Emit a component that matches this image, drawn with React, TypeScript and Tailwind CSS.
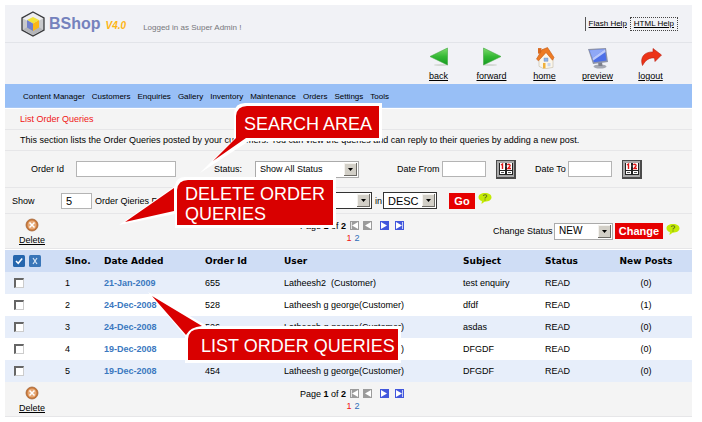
import type { ReactNode } from "react";

const menu = ["Content Manager", "Customers", "Enquiries", "Gallery", "Inventory", "Maintenance", "Orders", "Settings", "Tools"];

const queries = [
  { no: 1, date: "21-Jan-2009", order: "655", user: "Latheesh2  (Customer)", subject: "test enquiry", posts: 0 },
  { no: 2, date: "24-Dec-2008", order: "528", user: "Latheesh g george(Customer)", subject: "dfdf", posts: 1 },
  { no: 3, date: "24-Dec-2008", order: "526", user: "Latheesh g george(Customer)", subject: "asdas", posts: 0 },
  { no: 4, date: "19-Dec-2008", order: "454", user: "Latheesh g george(Customer)", subject: "DFGDF", posts: 0 },
  { no: 5, date: "19-Dec-2008", order: "454", user: "Latheesh g george(Customer)", subject: "DFGDF", posts: 0 },
];

function Logo() {
  return (
    <svg className="h-[26px] w-6" viewBox="0 0 24 26" aria-hidden="true">
      <path d="M12 1 23 7v12l-11 6L1 19V7z" fill="#c9cacd" stroke="#38393c" strokeWidth="1.300" />
      <path d="M12 2 22 7.500 12 13 2 7.500z" fill="#eeeef0" />
      <path d="M12 24 22 18.500 12 13 2 18.500z" fill="#b4b5b9" />
      <path d="m12 6 6 3-6 3.500L6 9z" fill="#f2e43a" />
      <path d="m6 9 6 3.500V20l-6-3.500z" fill="#7080cc" />
      <path d="m18 9-6 3.500V20l6-3.500z" fill="#fbb716" />
    </svg>
  );
}

function BackIcon() {
  return (
    <svg className="h-5 w-5" viewBox="0 0 20 20" aria-hidden="true">
      <defs>
        <linearGradient id="green" x1="0" y1="0" x2="0" y2="1">
          <stop offset="0" stopColor="#7ddb6c" />
          <stop offset="0.5" stopColor="#35b935" />
          <stop offset="1" stopColor="#159a20" />
        </linearGradient>
      </defs>
      <ellipse cx="12" cy="18" rx="7" ry="1" fill="#d4d8d4" />
      <path d="M18.500 1v17L1 9.500z" fill="url(#green)" stroke="#42a83f" strokeWidth=".6" />
    </svg>
  );
}

function ForwardIcon() {
  return (
    <svg className="h-5 w-5" viewBox="0 0 20 20" aria-hidden="true">
      <ellipse cx="8" cy="18" rx="7" ry="1" fill="#d4d8d4" />
      <path d="M1.500 1v17L19 9.500z" fill="url(#green)" stroke="#42a83f" strokeWidth=".6" />
    </svg>
  );
}

function HomeIcon() {
  return (
    <svg className="h-[22px] w-5" viewBox="0 0 20 20" preserveAspectRatio="none" aria-hidden="true">
      <path d="M4 9.500 12 4l6 7v7.500L9 20l-5-2.500z" fill="#fbf6ea" stroke="#c5bda9" strokeWidth=".6" />
      <path d="M3 1h3.500v5H3z" fill="#d9691f" />
      <path d="M1.500 11 7 2.500 12.500.5l6.500 9-1.500 2.500L11 5 3.500 12.500z" fill="#ee7b24" stroke="#c45b15" strokeWidth=".6" />
      <path d="M9 10h4v3H9z" fill="#8fb4e8" stroke="#6f8fc0" strokeWidth=".4" />
      <path d="M8 14.500h2.500v5H8z" fill="#efb13b" />
      <path d="M12.500 14.500h3v3h-3z" fill="#c8d7ee" />
    </svg>
  );
}

function PreviewIcon() {
  return (
    <svg className="h-[22px] w-[22px]" viewBox="0 0 22 22" aria-hidden="true">
      <ellipse cx="13" cy="19.500" rx="6.500" ry="2" fill="#a5a8b2" />
      <path d="m11 15 4 0 .5 4h-4z" fill="#7d808c" />
      <path d="m1 2 18-1 2 14-15 2z" fill="#8d93a8" />
      <path d="m2.500 3.200 15.500-1 1.500 11.300-12.500 1.800z" fill="#4c6fe8" />
      <path d="M2.500 3.200 18 2.200 5.500 11z" fill="#8fa8f6" />
      <path d="M18 2.200 5.500 11l.8 2.400L18.500 5z" fill="#b9c8fb" />
    </svg>
  );
}

function LogoutIcon() {
  return (
    <svg className="h-5 w-[22px]" viewBox="0 0 22 20" aria-hidden="true">
      <path d="M13 1.500 21.500 8 15 14.500l-.5-3.500c-5-.5-8.500 1.500-12 7.500C-.5 10 5 4.500 13 5z" fill="#ec3317" stroke="#b92010" strokeWidth=".6" />
    </svg>
  );
}

const shortcuts: { label: string; icon: ReactNode }[] = [
  { label: "back", icon: <BackIcon /> },
  { label: "forward", icon: <ForwardIcon /> },
  { label: "home", icon: <HomeIcon /> },
  { label: "preview", icon: <PreviewIcon /> },
  { label: "logout", icon: <LogoutIcon /> },
];

function Picker({ id, label, options, frame, text }: { id: string; label: string; options: string[]; frame: string; text: string }) {
  return (
    <span className={`relative flex h-[17px] border bg-white ${frame}`}>
      <select id={id} aria-label={label} className={`h-[15px] w-full appearance-none bg-transparent pr-4 pl-1 outline-none ${text}`}>
        {options.map((o) => (
          <option key={o}>{o}</option>
        ))}
      </select>
      <svg className="pointer-events-none absolute top-px right-px h-[13px] w-[13px]" viewBox="0 0 13 13" aria-hidden="true">
        <path d="M0 0h13v13H0z" fill="#6d6b66" />
        <path d="M0 0h12v12H0z" fill="#f4f2ee" />
        <path d="M1 1h11v11H1z" fill="#d2cfc7" />
        <path d="M4 5h5L6.500 8z" fill="#000" />
      </svg>
    </span>
  );
}

function CalendarButton({ label }: { label: string }) {
  return (
    <button type="button" aria-label={label} className="h-[19px] w-5 shrink-0">
      <svg viewBox="0 0 20 19" className="h-full w-full">
        <path d="M0 0h20v19H0z" fill="#4b4b4b" />
        <path d="M1 1h17v16H1z" fill="#a9a9a9" />
        <path d="M3 3h14v12H3z" fill="#222" />
        <path d="M4 3h5v7H4zM11 3h5v7h-5zM4 11h5v3H4zM11 11h5v3h-5z" fill="#fff" />
        <path d="M5 5l1.500-1v5M11.500 5c1-1.500 3-.5 2.500 1L12 8.500h3" fill="none" stroke="#e01515" strokeWidth="1.400" />
        <path d="M5 12.500h3M12 12.500h3M9 6h2" stroke="#555" />
      </svg>
    </button>
  );
}

function HelpBubble() {
  return (
    <button type="button" aria-label="Help" className="mb-1 h-[11px] w-[14px] shrink-0">
      <svg viewBox="0 0 14 11" className="h-full w-full">
        <path d="M7 0c4 0 6.500 1.800 6.500 4.300S11 8.700 6.500 8.700L3.500 11l.4-2.900C1.600 7.500.5 6 .5 4.300.5 1.800 3 0 7 0z" fill="#c3ea06" />
        <path d="M5.300 3c.3-1.800 3.700-1.600 3.400.2C8.600 4.200 7 4.200 7 5.500M7 6.400v1.200" fill="none" stroke="#667a20" strokeWidth="1.100" />
      </svg>
    </button>
  );
}

function DeleteButton() {
  return (
    <button type="button" className="flex w-[54px] flex-col items-center pt-[2px]">
      <svg className="h-[14px] w-[14px]" viewBox="0 0 14 14" aria-hidden="true">
        <circle cx="7" cy="7" r="6" fill="#c87535" stroke="#a5673a" strokeWidth=".8" />
        <circle cx="7" cy="7" r="4.500" fill="#e6a875" />
        <path d="m4.500 4.500 5 5M9.500 4.500l-5 5" stroke="#fff" strokeWidth="1.500" />
      </svg>
      <span className="mt-[2px] leading-3 underline">Delete</span>
    </button>
  );
}

function PageArrow({ label, next, edge }: { label: string; next?: boolean; edge?: boolean }) {
  return (
    <button type="button" aria-label={label} className={`h-[9px] w-[9px] ${next ? "text-[#4257dc]" : "text-[#9b9b9b]"}`}>
      <svg viewBox="0 0 9 9" className="h-full w-full">
        <path d="M0 0h9v9H0z" fill="currentColor" />
        <path d={next ? "M1 1v7l6-3.500z" : "M8 1v7L2 4.500z"} fill="#fff" />
        {edge && <path d={next ? "M7.500 1v7" : "M1.500 1v7"} stroke="#fff" strokeOpacity=".7" />}
      </svg>
    </button>
  );
}

function Pager() {
  return (
    <div className="flex w-[106px] flex-col pt-px leading-3">
      <div className="flex items-center">
        <span className="w-[50px] whitespace-nowrap">
          Page <b>1</b> of <b>2</b>
        </span>
        <div className="flex gap-1">
          <PageArrow label="First page" edge />
          <PageArrow label="Previous page" />
        </div>
        <div className="ml-2 flex gap-[6px]">
          <PageArrow label="Next page" next />
          <PageArrow label="Last page" next edge />
        </div>
      </div>
      <div className="flex justify-center gap-[3px]">
        <a href="#1" className="text-[#f01414]">1</a>
        <a href="#2" className="text-[#2f6db8]">2</a>
      </div>
    </div>
  );
}

const field = "h-4 border border-[#b4b4b4] bg-white px-1 outline-none";
const redButton = "h-4 bg-[#e60000] text-center font-['Liberation_Sans',Arial,sans-serif] text-[11px] leading-4 font-bold text-white";
const bar = "flex items-center border-b border-[#e6e6e8] bg-[#f4f4f4]";

export default function App() {
  return (
    <main className="relative bg-white pt-[5px] pr-[10px] pb-[5px] pl-[5px] font-['Liberation_Sans',Arial,sans-serif] text-[9px] leading-3 text-black">
      <header className="bg-[#f1f2f6]">
        <div className="flex h-[38px] items-center border-b border-[#e2e4e9] pr-[14px] pl-4">
          <Logo />
          <h1 className="ml-1 text-[16px] leading-5 font-bold text-[#7582bd]">BShop</h1>
          <span className="mt-1 ml-[5px] text-[10px] font-bold text-[#fdb515] italic">V4.0</span>
          <span className="mt-2 ml-[17px] text-[8px] text-[#77777b]">Logged in as Super Admin !</span>
          <nav className="ml-auto flex items-center gap-[3px] text-[8px]" aria-label="Help">
            <a href="#flash" className="border-l border-[#555] py-px pl-[3px] underline">Flash Help</a>
            <a href="#html" className="border border-dotted border-[#444] px-[3px] underline">HTML Help</a>
          </nav>
        </div>
        <nav className="flex h-[41px] justify-end pr-[15px]" aria-label="Shortcuts">
          {shortcuts.map((s) => (
            <a key={s.label} href={`#${s.label}`} className="flex w-[53px] flex-col items-center pt-1">
              <span className="flex h-[23px] items-start">{s.icon}</span>
              <span className="underline">{s.label}</span>
            </a>
          ))}
        </nav>
      </header>

      <nav className="flex h-6 items-center gap-[7px] border-b border-[#a9c8f4] bg-[#98bff6] pt-[2px] pl-[18px] text-[8px]" aria-label="Main">
        {menu.map((m) => (
          <a key={m} href={`#${m}`} className="whitespace-nowrap">{m}</a>
        ))}
      </nav>

      <h2 className={`${bar} mt-px h-[21px] pl-[15px] text-[#f01414]`}>List Order Queries</h2>
      <p className={`${bar} h-[21px] pl-[15px] whitespace-nowrap`}>
        This section lists the Order Queries posted by your customers. You can view the queries and can reply to their queries by adding a new post.
      </p>

      <form className={`${bar} h-[37px]`}>
        <label htmlFor="order" className="ml-[26px] w-[45px]">Order Id</label>
        <input id="order" className={`${field} w-[100px]`} />
        <label htmlFor="status" className="ml-[38px] w-[41px]">Status:</label>
        <Picker id="status" label="Status" options={["Show All Status", "NEW", "READ"]} frame="w-[104px] border-[#aaa]" text="text-[9px]" />
        <label htmlFor="from" className="ml-[38px] w-[45px] whitespace-nowrap">Date From</label>
        <input id="from" className={`${field} w-11`} />
        <span className="ml-[10px] flex"><CalendarButton label="Pick start date" /></span>
        <label htmlFor="to" className="ml-[19px] w-[33px] whitespace-nowrap">Date To</label>
        <input id="to" className={`${field} w-11`} />
        <span className="ml-[10px] flex"><CalendarButton label="Pick end date" /></span>
      </form>

      <form className={`${bar} h-[26px]`}>
        <label htmlFor="size" className="ml-[7px] w-[49px]">Show</label>
        <input id="size" defaultValue="5" className={`${field} w-[31px] text-[11px]`} />
        <label htmlFor="sort" className="ml-[3px] w-[103px] whitespace-nowrap">Order Qieries Per Page</label>
        <span className="ml-[78px] flex"><Picker id="sort" label="Sort by" options={["Date", "Order Id"]} frame="w-24 border-[#333]" text="text-[11px]" /></span>
        <label htmlFor="direction" className="ml-[3px] w-2">in</label>
        <Picker id="direction" label="Sort direction" options={["DESC", "ASC"]} frame="w-[54px] border-[#333]" text="text-[11px]" />
        <button type="button" className={`${redButton} mr-[3px] ml-3 w-[26px]`}>Go</button>
        <HelpBubble />
      </form>

      <section className={`${bar} h-[35px]`}>
        <DeleteButton />
        <div className="ml-[241px]"><Pager /></div>
        <form className="mr-3 ml-auto flex items-center">
          <label htmlFor="change" className="w-[61px] whitespace-nowrap">Change Status</label>
          <Picker id="change" label="Change status" options={["NEW", "READ"]} frame="w-[59px] border-[#aaa]" text="text-[10px]" />
          <button type="button" className={`${redButton} mr-[3px] ml-[2px] w-12`}>Change</button>
          <HelpBubble />
        </form>
      </section>

      <table className="mt-px w-full table-fixed text-left">
        <colgroup>
          <col className="w-[60px]" />
          <col className="w-[39px]" />
          <col className="w-[101px]" />
          <col className="w-[79px]" />
          <col className="w-[179px]" />
          <col className="w-[82px]" />
          <col className="w-[55px]" />
          <col />
        </colgroup>
        <thead className="bg-[#cfddf5] font-['DejaVu_Sans',sans-serif] font-bold">
          <tr className="h-[22px]">
            <th className="pl-2">
              <div className="flex gap-1">
                <button type="button" aria-label="Select all" className="h-3 w-3">
                  <svg viewBox="0 0 12 12" className="h-full w-full">
                    <rect width="12" height="12" rx="1.500" fill="#2566ae" />
                    <path d="m3 6 2.200 2.300L9.200 3.500" fill="none" stroke="#fff" strokeWidth="1.500" />
                  </svg>
                </button>
                <button type="button" aria-label="Clear selection" className="h-3 w-3">
                  <svg viewBox="0 0 12 12" className="h-full w-full">
                    <rect width="12" height="12" rx="1.500" fill="#3a76b8" />
                    <path d="m4 3 4 6M8 3 4 9" stroke="#dbe8f6" strokeWidth="1.200" />
                  </svg>
                </button>
              </div>
            </th>
            <th>Slno.</th>
            <th>Date Added</th>
            <th>Order Id</th>
            <th>User</th>
            <th>Subject</th>
            <th>Status</th>
            <th className="text-center">New Posts</th>
          </tr>
        </thead>
        <tbody>
          {queries.map((q) => (
            <tr key={q.no} className="h-[22px] odd:bg-[#e7eefa]">
              <td className="pl-[9px]">
                <input
                  type="checkbox"
                  aria-label={`Select query ${q.no}`}
                  className="block h-[10px] w-[10px] appearance-none border-t-2 border-r border-b border-l-2 border-t-[#666] border-r-[#ccc] border-b-[#ccc] border-l-[#666] bg-white checked:bg-[#2566ae]"
                />
              </td>
              <td>{q.no}</td>
              <td>
                <a href={`#query-${q.no}`} className="font-bold text-[#3b78bf]">{q.date}</a>
              </td>
              <td>{q.order}</td>
              <td className="whitespace-pre">{q.user}</td>
              <td>{q.subject}</td>
              <td>READ</td>
              <td className="text-center">({q.posts})</td>
            </tr>
          ))}
        </tbody>
      </table>

      <section className={`${bar} h-[35px]`}>
        <DeleteButton />
        <div className="ml-[241px]"><Pager /></div>
      </section>

      <aside className="absolute top-[103px] left-[200px] h-[70px] w-[182px] text-[18px] leading-5 text-white">
        <svg className="absolute inset-0 h-full w-full" viewBox="0 0 182 70" aria-hidden="true">
          <path d="M34 10Q35 0 45 0H182V38H49L0 70 34 36z" fill="#fff" />
          <path d="M36 13Q37 3 47 3H179V35H46L13 58 36 35z" fill="#d90000" />
        </svg>
        <p className="relative pt-[11px] pl-11 whitespace-nowrap">SEARCH AREA</p>
      </aside>

      <aside className="absolute top-[177px] left-[119px] h-[51px] w-[217px] text-[18px] leading-5 text-white">
        <svg className="absolute inset-0 h-full w-full" viewBox="0 0 217 51" aria-hidden="true">
          <path d="M56 9Q57 0 66 0H217V51H56V37L0 48 56 9z" fill="#fff" />
          <path d="M58 13Q59 3 69 3H214V48H58zM55 11V34L6 45z" fill="#d90000" />
        </svg>
        <p className="relative pt-[7px] pl-[66px] whitespace-nowrap">
          DELETE ORDER
          <br />
          QUERIES
        </p>
      </aside>

      <aside className="absolute top-[292px] left-[147px] h-[71px] w-[254px] text-[18px] leading-5 text-white">
        <svg className="absolute inset-0 h-full w-full" viewBox="0 0 254 71" aria-hidden="true">
          <path d="M1 0 60 34H254V71H38V44z" fill="#fff" />
          <path d="M5 4 55 34Q43 35 39 43zM41 47Q42 37 52 37H251V68H41z" fill="#d90000" />
        </svg>
        <p className="relative pt-11 pl-[54px] whitespace-nowrap">LIST ORDER QUERIES</p>
      </aside>
    </main>
  );
}
